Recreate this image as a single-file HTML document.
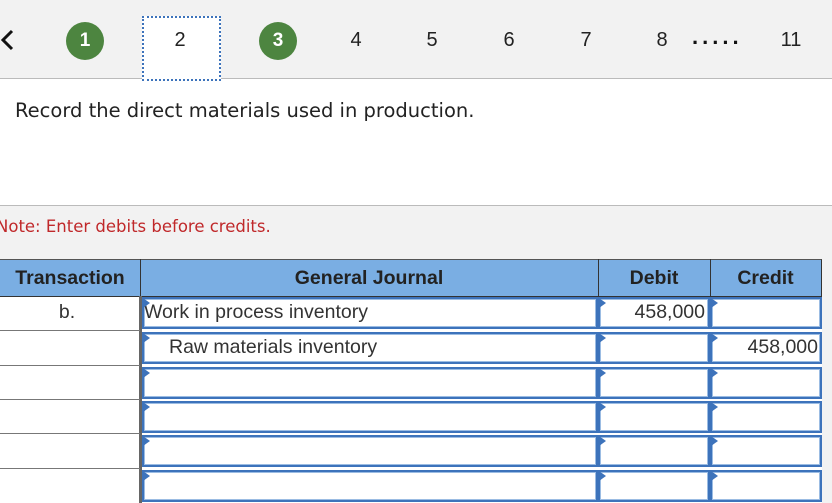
<!DOCTYPE html>
<html><head><style>
body{margin:0;width:832px;height:503px;overflow:hidden;background:#f2f2f2;position:relative;font-family:"Liberation Sans",Arial,sans-serif}
.a{position:absolute}
.n{position:absolute;top:29px;font-size:20px;color:#222;width:30px;text-align:center}
.c{position:absolute;top:22px;width:38px;height:38px;border-radius:50%;background:#4d8540;color:#fff;font-size:19px;font-weight:bold;text-align:center;line-height:38px}
.inp{position:absolute;box-sizing:border-box;border:2px solid #3d73bb;box-shadow:inset 0 0 0 1px #9bbce3;background:#fff;font-size:19.5px;color:#333;line-height:26px;height:32px}
.inp:before{content:"";position:absolute;left:-1px;top:-1px;border-left:7px solid #3d73bb;border-top:5px solid transparent;border-bottom:5px solid transparent}
.hl{position:absolute;left:0;width:140px;height:1px;background:#777}
</style></head><body>
<div class="a" style="left:0;top:78px;width:832px;height:126px;background:#fff;border-top:1px solid #bbb;border-bottom:1px solid #bbb"></div>
<svg class="a" style="left:0;top:29px" width="16" height="22"><path d="M12 2 L3 11 L12 20" stroke="#111" stroke-width="3" fill="none"/></svg>
<div class="c" style="left:66px">1</div>
<div class="a" style="left:142px;top:16px;width:75px;height:61px;background:#fff;border:2px dotted #3d73bb"></div>
<div class="n" style="left:165px">2</div>
<div class="c" style="left:259px">3</div>
<div class="n" style="left:341px">4</div>
<div class="n" style="left:417px">5</div>
<div class="n" style="left:494px">6</div>
<div class="n" style="left:571px">7</div>
<div class="n" style="left:647px">8</div>
<div class="a" style="left:692px;top:24px;font-size:22px;font-weight:bold;letter-spacing:4px;color:#111">.....</div>
<div class="n" style="left:776px">11</div>
<div class="a" style="left:15px;top:99px;font-family:'DejaVu Sans',sans-serif;font-size:19.5px;color:#222">Record the direct materials used in production.</div>
<div class="a" style="left:-4px;top:217px;font-family:'DejaVu Sans',sans-serif;font-size:16.5px;color:#c0282a">Note: Enter debits before credits.</div>
<div class="a" style="left:0;top:259px;width:822px;height:244px;background:#fff"></div>
<div class="a" style="left:0;top:259px;width:821px;height:36px;background:#7aaee3;border-top:1px solid #555;border-right:1px solid #333;border-bottom:1px solid #333;font-weight:bold;font-size:19.5px;color:#222;line-height:36px">
<span class="a" style="left:0;width:140px;text-align:center">Transaction</span>
<span class="a" style="left:140px;width:458px;text-align:center">General Journal</span>
<span class="a" style="left:598px;width:112px;text-align:center">Debit</span>
<span class="a" style="left:710px;width:111px;text-align:center">Credit</span>
</div>
<div class="a" style="left:140px;top:259px;width:1px;height:37px;background:#333"></div>
<div class="a" style="left:598px;top:259px;width:1px;height:37px;background:#333"></div>
<div class="a" style="left:710px;top:259px;width:1px;height:37px;background:#333"></div>
<div class="a" style="left:139px;top:296px;width:3px;height:207px;background:#666"></div>
<div class="hl" style="top:330px"></div><div class="hl" style="top:365px"></div><div class="hl" style="top:399px"></div><div class="hl" style="top:433px"></div><div class="hl" style="top:468px"></div>
<div class="a" style="left:0;top:301px;width:134px;text-align:center;font-size:19.5px;color:#333">b.</div>
<div class="inp" style="left:142px;top:297px;width:456px">Work in process inventory</div>
<div class="inp" style="left:598px;top:297px;width:112px;text-align:right;padding-right:3px">458,000</div>
<div class="inp" style="left:710px;top:297px;width:112px"></div>
<div class="inp" style="left:142px;top:332px;width:456px;padding-left:25px">Raw materials inventory</div>
<div class="inp" style="left:598px;top:332px;width:112px"></div>
<div class="inp" style="left:710px;top:332px;width:112px;text-align:right;padding-right:2px">458,000</div>
<div class="inp" style="left:142px;top:367px;width:456px"></div><div class="inp" style="left:598px;top:367px;width:112px"></div><div class="inp" style="left:710px;top:367px;width:112px"></div>
<div class="inp" style="left:142px;top:401px;width:456px"></div><div class="inp" style="left:598px;top:401px;width:112px"></div><div class="inp" style="left:710px;top:401px;width:112px"></div>
<div class="inp" style="left:142px;top:435px;width:456px"></div><div class="inp" style="left:598px;top:435px;width:112px"></div><div class="inp" style="left:710px;top:435px;width:112px"></div>
<div class="inp" style="left:142px;top:470px;width:456px"></div><div class="inp" style="left:598px;top:470px;width:112px"></div><div class="inp" style="left:710px;top:470px;width:112px"></div>
</body></html>
